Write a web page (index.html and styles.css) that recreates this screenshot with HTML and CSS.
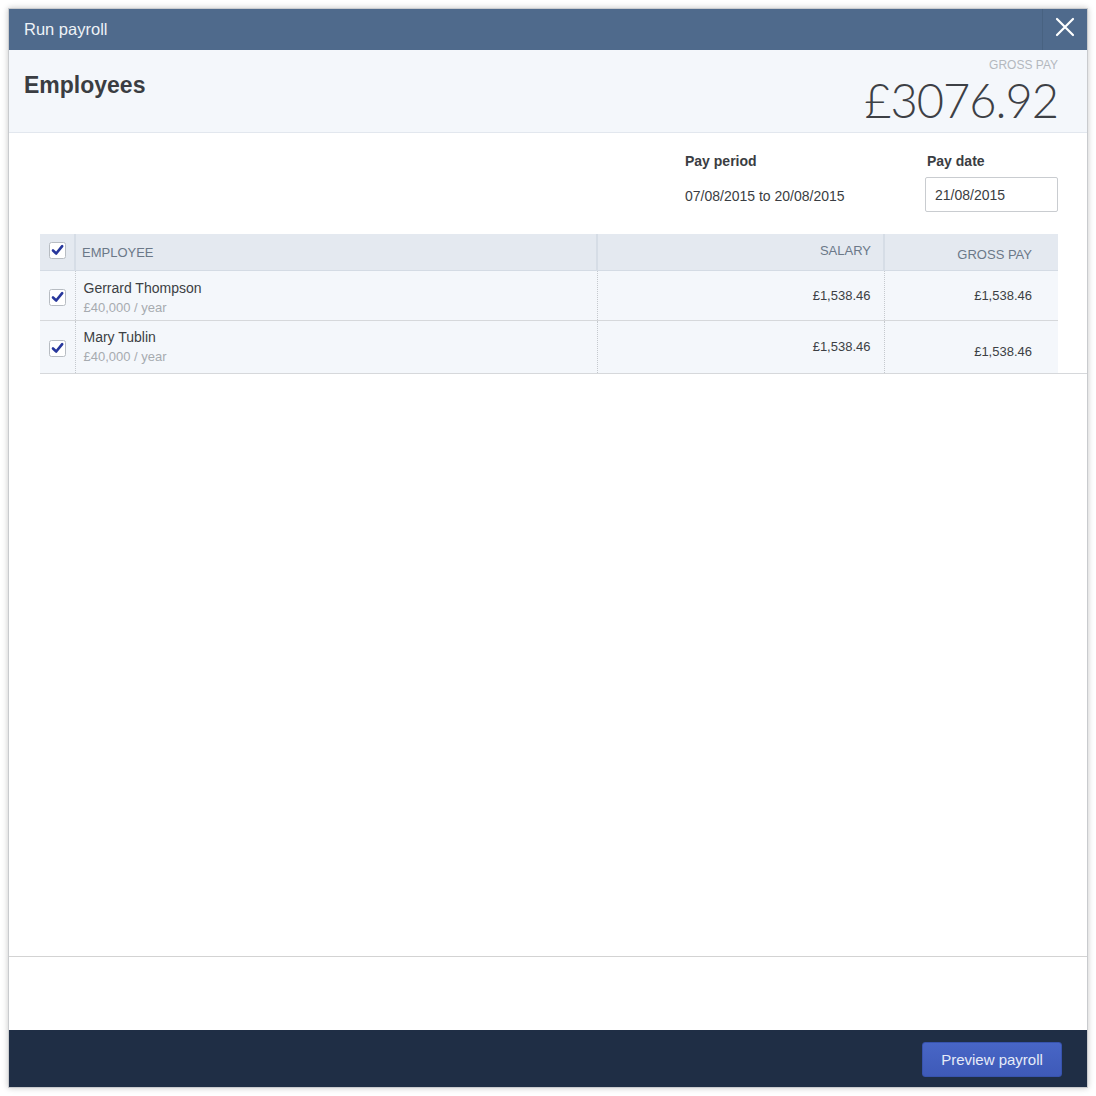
FILE: index.html
```html
<!DOCTYPE html>
<html lang="en">
<head>
<meta charset="utf-8">
<title>Run payroll</title>
<link rel="stylesheet" href="styles.css">
</head>
<body>
<div class="dialog">
  <div class="titlebar">
    <div class="title">Run payroll</div>
    <div class="close">
      <svg width="20" height="20" viewBox="0 0 20 20"><path d="M2 2 L18 18 M18 2 L2 18" stroke="#ffffff" stroke-width="2.2" stroke-linecap="round"/></svg>
    </div>
  </div>
  <div class="header">
    <h1 class="heading">Employees</h1>
    <div class="total">
      <div class="total-label">GROSS PAY</div>
      <div class="total-amount">£3076.92</div>
    </div>
  </div>
  <div class="body">
    <div class="meta">
      <div class="meta-block period">
        <div class="meta-label">Pay period</div>
        <div class="meta-value">07/08/2015 to 20/08/2015</div>
      </div>
      <div class="meta-block">
        <div class="meta-label">Pay date</div>
        <div class="date-input">21/08/2015</div>
      </div>
    </div>
    <div class="table-wrap">
      <table class="grid">
        <colgroup>
          <col class="c-check"><col class="c-emp"><col class="c-sal"><col class="c-gross">
        </colgroup>
        <thead>
          <tr>
            <th class="cb"><svg class="box" width="17" height="17" viewBox="0 0 17 17"><rect x="0.5" y="0.5" width="16" height="16" rx="2" fill="#fff" stroke="#b7bcc2"/><path d="M4 8.5 L7.2 11.5 L13.2 4.2" fill="none" stroke="#27379c" stroke-width="2.6" stroke-linecap="round" stroke-linejoin="round"/></svg></th>
            <th class="h-emp">EMPLOYEE</th>
            <th class="h-num h-sal">SALARY</th>
            <th class="h-num h-gross">GROSS PAY</th>
          </tr>
        </thead>
        <tbody>
          <tr class="r1">
            <td class="cb"><svg class="box" width="17" height="17" viewBox="0 0 17 17"><rect x="0.5" y="0.5" width="16" height="16" rx="2" fill="#fff" stroke="#b7bcc2"/><path d="M4 8.5 L7.2 11.5 L13.2 4.2" fill="none" stroke="#27379c" stroke-width="2.6" stroke-linecap="round" stroke-linejoin="round"/></svg></td>
            <td class="emp"><div class="name">Gerrard Thompson</div><div class="rate">£40,000 / year</div></td>
            <td class="num sal">£1,538.46</td>
            <td class="num gross">£1,538.46</td>
          </tr>
          <tr class="r2">
            <td class="cb"><svg class="box" width="17" height="17" viewBox="0 0 17 17"><rect x="0.5" y="0.5" width="16" height="16" rx="2" fill="#fff" stroke="#b7bcc2"/><path d="M4 8.5 L7.2 11.5 L13.2 4.2" fill="none" stroke="#27379c" stroke-width="2.6" stroke-linecap="round" stroke-linejoin="round"/></svg></td>
            <td class="emp"><div class="name">Mary Tublin</div><div class="rate">£40,000 / year</div></td>
            <td class="num sal">£1,538.46</td>
            <td class="num gross lower">£1,538.46</td>
          </tr>
        </tbody>
      </table>
    </div>
  </div>
  <div class="spacer"></div>
  <div class="footer">
    <button class="primary">Preview payroll</button>
  </div>
</div>
</body>
</html>
```

FILE: styles.css
```css
* { box-sizing: border-box; }
html, body { margin: 0; padding: 0; background: #ffffff; }
body { font-family: "Liberation Sans", Arial, Helvetica, sans-serif; color: #3c3f44; }

.dialog {
  margin: 8px;
  width: 1080px;
  height: 1080px;
  border: 1px solid #c9cbce;
  box-shadow: 0 0 6px rgba(0,0,0,0.22);
  display: flex;
  flex-direction: column;
  background: #fff;
}

.titlebar {
  height: 41px;
  background: #4f6a8c;
  display: flex;
  align-items: stretch;
  flex: none;
}
.title {
  flex: 1;
  color: #eef2f7;
  font-size: 16.5px;
  line-height: 41px;
  padding-left: 15px;
}
.close {
  width: 45px;
  border-left: 1px solid #486281;
  display: flex;
  align-items: center;
  justify-content: center;
  padding-bottom: 6px;
}

.header {
  height: 83px;
  flex: none;
  background: #f4f7fb;
  border-bottom: 1px solid #e2e7ee;
  display: flex;
  justify-content: space-between;
  padding: 0 29px 0 15px;
}
.heading {
  margin: 0;
  font-size: 23px;
  font-weight: bold;
  color: #3a3d42;
  line-height: 26px;
  padding-top: 22px;
}
.total { text-align: right; padding-top: 8px; }
.total-label {
  font-size: 12px;
  line-height: 14px;
  color: #b3b8be;
}
.total-amount {
  font-family: Lato, Roboto, "Liberation Sans", sans-serif;
  font-weight: 300;
  font-size: 47px;
  line-height: 50px;
  letter-spacing: -1px;
  color: #3d4045;
  margin-top: 3px;
  margin-right: 0;
}

.body {
  flex: 1;
  border-bottom: 1px solid #d3d3d3;
  padding: 20px 0 0 31px;
}
.meta {
  display: flex;
  justify-content: flex-end;
  padding-right: 29px;
}
.meta-block.period { width: 240px; }
.meta-label {
  font-size: 14px;
  font-weight: bold;
  color: #3a3d42;
  line-height: 17px;
  padding-left: 2px;
}
.period .meta-label { padding-left: 0; }
.meta-value {
  margin-top: 9px;
  font-size: 14px;
  line-height: 35px;
  color: #3a3d42;
}
.date-input {
  margin-top: 7px;
  width: 133px;
  height: 35px;
  border: 1px solid #c9ccd0;
  border-radius: 2px;
  font-size: 14px;
  line-height: 33px;
  padding: 1px 0 0 9px;
  color: #3a3d42;
}

.table-wrap {
  margin-top: 20px;
  padding-right: 29px;
  border-bottom: 1px solid #d6d8db;
}
.grid {
  width: 1018px;
  border-collapse: collapse;
  table-layout: fixed;
}
.c-check { width: 35px; }
.c-emp { width: 522px; }
.c-sal { width: 287px; }
.c-gross { width: 174px; }

.grid th {
  height: 36px;
  background: #e4e9f0;
  border-bottom: 1px solid #d4dbe4;
  font-weight: normal;
  font-size: 13px;
  color: #6b7888;
  text-align: left;
  padding: 0;
}
.grid th + th { border-left: 2px solid #d6dde6; }
.grid th.cb { padding-left: 9px; vertical-align: middle; padding-bottom: 3px; }
.h-emp { padding-left: 6px !important; padding-top: 2px !important; }
.h-num { text-align: right !important; }
.h-sal { padding-right: 12px !important; padding-bottom: 3px !important; }
.h-gross { padding-right: 26px !important; padding-top: 5px !important; }

.grid td {
  background: #f4f7fb;
  padding: 0;
  vertical-align: middle;
}
.grid td + td { border-left: 1px dotted #c5c9ce; }
.r1 td { height: 50px; border-bottom: 1px solid #d6d8db; }
.r2 td { height: 53px; }
.grid td.cb { padding-left: 9px; padding-top: 4px; }
.box { display: block; }

.emp { padding-left: 8px !important; }
.name { font-size: 14px; line-height: 20px; color: #3c3f44; }
.rate { font-size: 13px; line-height: 20px; color: #a7abb0; }
.r1 .emp { padding-top: 6px; }
.num { text-align: right; font-size: 13px; color: #3c3f44; }
.sal { padding-right: 13px !important; }
.r1 .num { padding-top: 1px; }
.gross { padding-right: 26px !important; }
.gross.lower { padding-top: 10px !important; }

.spacer { height: 73px; flex: none; }

.footer {
  height: 57px;
  flex: none;
  background: #1f2e45;
  display: flex;
  justify-content: flex-end;
  align-items: flex-start;
  padding: 12px 25px 0 0;
}
.primary {
  width: 140px;
  height: 35px;
  border: 1px solid #3753ad;
  border-radius: 3px;
  background: linear-gradient(#4866c6, #3e5ab8);
  color: #e6ebf8;
  font-family: "Liberation Sans", Arial, sans-serif;
  font-size: 15px;
  padding: 0;
}
```
